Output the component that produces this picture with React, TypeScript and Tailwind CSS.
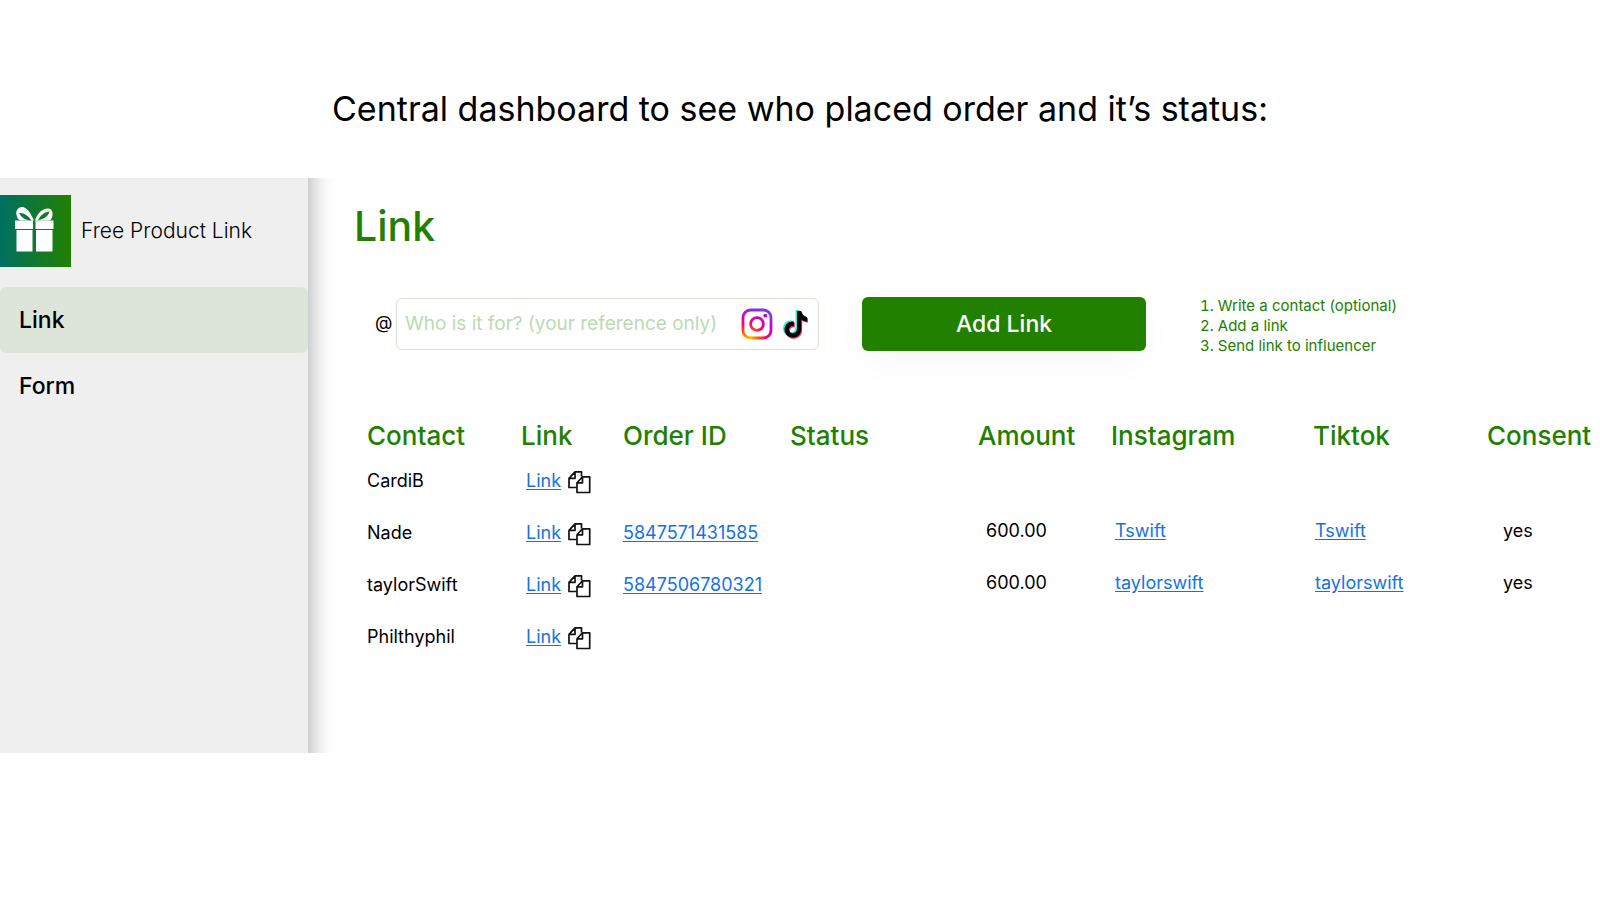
import React, { useState } from "react";

const rows = [
  { contact: "CardiB" },
  {
    contact: "Nade",
    orderId: "5847571431585",
    amount: "600.00",
    handle: "Tswift",
    consent: "yes",
  },
  {
    contact: "taylorSwift",
    orderId: "5847506780321",
    amount: "600.00",
    handle: "taylorswift",
    consent: "yes",
  },
  { contact: "Philthyphil" },
];

const GiftLogo = () => (
  <svg viewBox="0 0 71 72" className="w-[71px] h-[72px]" aria-hidden="true">
    <defs>
      <linearGradient id="gift" x1="0" y1="0" x2="1" y2="0">
        <stop offset="0" stopColor="#007060" />
        <stop offset="1" stopColor="#228000" />
      </linearGradient>
    </defs>
    <rect width="71" height="72" fill="url(#gift)" />
    <g fill="#fff">
      <path d="M15 25.500h18v8.500h-18zM35.500 25.500h18v8.500h-18z" />
      <path d="M16.500 35h16v21.500h-16zM36 35h16.500v21.500h-16.500z" />
      <path
        fillRule="evenodd"
        d="M34 25.500C31 19 27 12 22 12c-4 0-6.500 4-5.500 8 .5 3 2 5 4 5.500zM31.500 25.500c-5 0-10-2.500-12.500-7.500 5-.5 9.500 3 12.500 7.500z"
      />
      <path
        fillRule="evenodd"
        d="M35 25.500C37 19 42 13.500 48 13.500c4.500 0 5.500 5 4 9-.5 1.500-1.500 3-3 3zM38 25c3-5 7-8.500 11.500-8.500C48.500 21 44 24.500 38 25z"
      />
    </g>
  </svg>
);

const InstagramIcon = () => (
  <svg viewBox="0 0 32 32" className="w-8 h-8" fill="none" aria-hidden="true">
    <defs>
      <radialGradient
        id="insta"
        gradientUnits="userSpaceOnUse"
        cx="8"
        cy="32"
        r="33"
      >
        <stop offset="0" stopColor="#ffd600" />
        <stop offset="0.25" stopColor="#ff6a00" />
        <stop offset="0.5" stopColor="#ff0069" />
        <stop offset="0.75" stopColor="#d300c5" />
        <stop offset="1" stopColor="#7638fa" />
      </radialGradient>
    </defs>
    <rect x="2" y="2" width="28" height="28" rx="7.500" stroke="url(#insta)" strokeWidth="2.800" />
    <circle cx="16" cy="16" r="6.400" stroke="url(#insta)" strokeWidth="2.800" />
    <circle cx="24.300" cy="7.700" r="1.900" fill="#c400c8" />
  </svg>
);

const note =
  "M12.500 0h4.200c.3 3.400 2.500 5.600 5.800 5.900v4.400c-2.200 0-4.200-.7-5.800-1.800v9.300c0 5-3.700 8.700-8.300 8.700-4.700 0-8.400-3.500-8.400-8.100 0-5 4.300-8.700 9.300-8v4.600c-2.700-.7-4.900 1-4.900 3.400 0 2.200 1.700 3.700 3.900 3.700 2.400 0 4.200-1.700 4.200-4.400z";

const TiktokIcon = () => (
  <svg viewBox="0 0 25 29" className="w-[25px] h-[29px]" aria-hidden="true">
    <path d={note} fill="#25f4ee" />
    <path d={note} fill="#fe2c55" transform="translate(2.500 2.300)" />
    <path d={note} fill="#000" transform="translate(1.500 1.100)" />
  </svg>
);

const CopyIcon = () => (
  <svg
    viewBox="0 0 24 24"
    className="w-6 h-6"
    fill="none"
    stroke="#111"
    strokeWidth="1.700"
    strokeLinejoin="round"
    aria-hidden="true"
  >
    <path d="M14.500 6.500v-4.700h-6.500l-6 6.500v9.200h7.500M8 1.800v6.500h-6" />
    <path d="M15.500 6.800h7.200v15.700h-12.700v-9.700zM15.500 6.800v6h-5.500" />
  </svg>
);

const linkStyle = "text-[#1273e6] underline underline-offset-2";

// The sidebar runs past the clipped panel so its shadow stays even top to bottom
const Sidebar = () => (
  <aside className="w-[308px] shrink-0 -my-8 pt-[49px] bg-[#efefef] shadow-[0_0_24px_rgba(0,0,0,0.38)]">
    <div className="flex items-center gap-[10px] mb-5">
      <GiftLogo />
      <span className="text-[21px] font-light">Free Product Link</span>
    </div>
    <nav className="flex flex-col text-[23px] font-medium">
      <a href="#link" className="h-[66px] px-[19px] flex items-center rounded-md bg-[#dde5da]">
        Link
      </a>
      <a href="#form" className="h-[66px] px-[19px] flex items-center rounded-md">
        Form
      </a>
    </nav>
  </aside>
);

const OrdersTable = () => (
  <table className="w-full table-fixed text-left whitespace-nowrap">
    <colgroup>
      <col className="w-[154px]" />
      <col className="w-[102px]" />
      <col className="w-[167px]" />
      <col className="w-[188px]" />
      <col className="w-[133px]" />
      <col className="w-[202px]" />
      <col className="w-[174px]" />
      <col />
    </colgroup>
    <thead>
      <tr className="h-9 text-[26px] leading-9 text-[#228000]">
        <th className="font-medium">Contact</th>
        <th className="font-medium">Link</th>
        <th className="font-medium">Order ID</th>
        <th className="font-medium">Status</th>
        <th className="font-medium">Amount</th>
        <th className="font-medium">Instagram</th>
        <th className="font-medium">Tiktok</th>
        <th className="font-medium">Consent</th>
      </tr>
    </thead>
    <tbody className="text-[18px]">
      {rows.map((row) => (
        <tr key={row.contact} className="h-[52px]">
          <td>{row.contact}</td>
          <td className="pl-[5px]">
            <div className="flex items-center gap-1.5">
              <a href="#order" className={linkStyle}>
                Link
              </a>
              <button type="button" aria-label="Copy link" className="pt-1">
                <CopyIcon />
              </button>
            </div>
          </td>
          <td>
            {row.orderId && (
              <a href="#order" className={linkStyle}>
                {row.orderId}
              </a>
            )}
          </td>
          <td></td>
          <td className="pl-2 pb-1">{row.amount}</td>
          <td className="pl-1 pb-1">
            {row.handle && (
              <a href="#instagram" className={linkStyle}>
                {row.handle}
              </a>
            )}
          </td>
          <td className="pl-0.5 pb-1">
            {row.handle && (
              <a href="#tiktok" className={linkStyle}>
                {row.handle}
              </a>
            )}
          </td>
          <td className="pl-4 pb-1">{row.consent}</td>
        </tr>
      ))}
    </tbody>
  </table>
);

const App = () => {
  const [contact, setContact] = useState("");
  return (
    <div className="min-h-screen bg-white text-black font-[Inter,sans-serif]">
      <h1 className="pt-[85px] pb-[45px] text-center text-[34px] leading-[48px]">
        Central dashboard to see who placed order and it’s status:
      </h1>
      <div className="flex min-h-[575px] overflow-hidden">
        <Sidebar />
        <main className="grow min-w-0 pt-5">
          <h2 className="pl-[46px] text-[41px] leading-[56px] font-medium text-[#228000]">
            Link
          </h2>
          <form
            className="flex items-center pl-[67px] mt-[38px]"
            onSubmit={(e) => e.preventDefault()}
          >
            <label htmlFor="contact" className="w-[21px] pb-1 text-[18px]">
              @
            </label>
            <div className="flex items-center w-[423px] h-[52px] pl-2 pr-[10px] border border-[#d5e5d1] rounded-md">
              <input
                id="contact"
                type="text"
                value={contact}
                onChange={(e) => setContact(e.target.value)}
                placeholder="Who is it for? (your reference only)"
                className="grow min-w-0 text-[19px] outline-none placeholder:text-[#bdd9b5]"
              />
              <InstagramIcon />
              <span className="w-[10px]" />
              <TiktokIcon />
            </div>
            <button
              type="submit"
              className="w-[284px] h-[54px] ml-[43px] rounded-md bg-[#228000] text-white text-[23px] font-medium shadow-[0_12px_36px_rgba(0,0,0,0.03)]"
            >
              Add Link
            </button>
            <ol className="ml-[54px] pt-1 text-[15px] leading-5 text-[#228000] list-decimal list-inside">
              <li>Write a contact (optional)</li>
              <li>Add a link</li>
              <li>Send link to influencer</li>
            </ol>
          </form>
          <div className="pl-[59px] mt-[62px]">
            <OrdersTable />
          </div>
        </main>
      </div>
    </div>
  );
};

export default App;
